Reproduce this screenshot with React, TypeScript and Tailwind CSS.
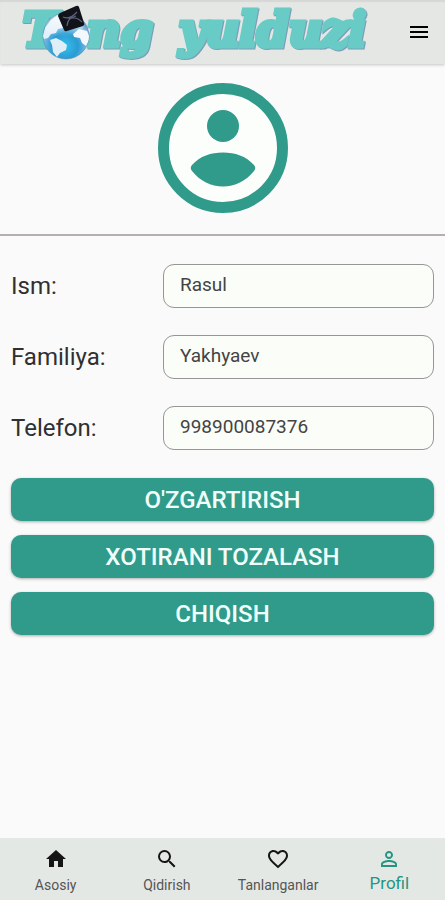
import React from 'react';
import { MdFavoriteBorder, MdHome, MdMenu, MdPersonOutline, MdSearch } from 'react-icons/md';

function Logo() {
  return (
    <svg viewBox="0 0 360 64" className="h-16 w-[360px] shrink-0" role="img" aria-label="Tong yulduzi">
      <defs>
        <radialGradient id="ocean" cx="48%" cy="72%" r="70%">
          <stop offset="0" stopColor="#35c0ec" />
          <stop offset="0.4" stopColor="#2a9bd3" />
          <stop offset="0.75" stopColor="#8fc3e8" />
          <stop offset="1" stopColor="#4f86bd" />
        </radialGradient>
        <linearGradient id="gloss" x1="0" y1="0" x2="0" y2="1">
          <stop offset="0" stopColor="#ffffff" stopOpacity="0.8" />
          <stop offset="1" stopColor="#ffffff" stopOpacity="0" />
        </linearGradient>
        <clipPath id="globe">
          <circle cx="50" cy="36" r="23" />
        </clipPath>
      </defs>
      <g
        fontFamily="'DejaVu Serif', serif"
        fontWeight="700"
        fontStyle="italic"
        fontSize="46"
        strokeWidth="5"
        strokeLinejoin="miter"
        fill="#68cbc5"
        stroke="#68cbc5"
        className="[filter:drop-shadow(1px_1px_0_#7d9bb8)]"
      >
        <text x="7" y="46">T</text>
        <text x="71" y="46">ng</text>
        <text x="163" y="46">yulduzi</text>
      </g>
      <circle cx="50" cy="36" r="23" fill="url(#ocean)" stroke="#4b7fb0" strokeWidth="0.5" />
      <g clipPath="url(#globe)">
        <path d="M27 36l2-8 6-8 7-5 7 3 2 5-4 5-5 1-2 4-5 1-3 4-4 1z" fill="#e3f0fb" />
        <path d="M34 40l6-2 6 3 5 4-1 5-6 3-3 4-4-5-1-7z" fill="#e0eef8" />
        <path d="M57 34l6-5 8 2 3 7-4 8-4-3-2-5-6-1z" fill="#f2f8fc" />
        <ellipse cx="48" cy="24" rx="20" ry="13" fill="url(#gloss)" />
      </g>
      <path d="M44 13l16-7q2-1 3 1l5 16q1 2-1 3l-16 5q-2 1-3-1l-6-14q0-2 2-3z" fill="#12121b" />
      <path d="M47 17q7 3 14-5M51 26q1-9 7-8 4 0 8 4M53 19l7-3" fill="none" stroke="#5c627a" strokeWidth="1.2" />
    </svg>
  );
}

function Avatar() {
  return (
    <svg viewBox="0 0 130 130" className="size-[130px] text-[#309b8a]" role="img" aria-label="Profil">
      <circle cx="65" cy="65" r="59.5" fill="#fcfefb" stroke="currentColor" strokeWidth="11" />
      <circle cx="65" cy="43" r="16" fill="currentColor" />
      <path
        d="M34 82C42 73 53 69.500 65 69.500S88 73 96 82Q98.500 85 96 88C88 98 77 103.500 65 103.500S42 98 34 88Q31.500 85 34 82z"
        fill="currentColor"
      />
    </svg>
  );
}

const fields = [
  { id: 'ism', label: 'Ism:', value: 'Rasul', type: 'text' },
  { id: 'familiya', label: 'Familiya:', value: 'Yakhyaev', type: 'text' },
  { id: 'telefon', label: 'Telefon:', value: '998900087376', type: 'tel' },
];

const actions = ["O'ZGARTIRISH", 'XOTIRANI TOZALASH', 'CHIQISH'];

const tabs = [
  { label: 'Asosiy', Icon: MdHome },
  { label: 'Qidirish', Icon: MdSearch },
  { label: 'Tanlanganlar', Icon: MdFavoriteBorder },
  { label: 'Profil', Icon: MdPersonOutline, active: true },
];

export default function App() {
  return (
    <div className="flex min-h-screen flex-col bg-[#fafafa] font-[Roboto,sans-serif] text-[#303030]">
      <header className="flex h-16 items-center justify-between bg-[#e5e7e4] pr-3.5 pl-4 shadow-[0_1px_3px_#00000035,inset_0_2px_1px_#d6d8d5]">
        <Logo />
        <button type="button" aria-label="Menyu" className="text-black">
          <MdMenu className="size-6" />
        </button>
      </header>

      <main className="flex-1">
        <div className="flex justify-center border-b-2 border-[#b5afae] pt-[19px] pb-[21px]">
          <Avatar />
        </div>
        <form className="px-[11px] pt-7" onSubmit={(e) => e.preventDefault()}>
          <div className="flex flex-col gap-[27px]">
            {fields.map((f) => (
              <div key={f.id} className="grid grid-cols-[152px_1fr] items-center">
                <label htmlFor={f.id} className="text-2xl leading-7">
                  {f.label}
                </label>
                <input
                  id={f.id}
                  type={f.type}
                  defaultValue={f.value}
                  className="h-11 w-full min-w-0 rounded-[11px] border border-[#969696] bg-[#fbfdf9] px-4 pb-1 text-[19px] text-[#444444] outline-none"
                />
              </div>
            ))}
          </div>
          <div className="mt-7 flex flex-col gap-3.5">
            {actions.map((a) => (
              <button
                key={a}
                type="button"
                className="h-[43px] rounded-[10px] bg-[#309b8a] text-2xl font-medium text-[#f0fffc] shadow-[0_1px_3px_#00000050]"
              >
                {a}
              </button>
            ))}
          </div>
        </form>
      </main>

      <nav className="grid h-[62px] grid-cols-4 bg-[#e4e8e4]">
        {tabs.map(({ label, Icon, active }) => (
          <a
            key={label}
            href="#"
            aria-current={active ? 'page' : undefined}
            className={
              active
                ? 'flex flex-col items-center pt-[9px] text-[17px] leading-6 text-[#249583]'
                : 'flex flex-col items-center pt-[9px] text-sm leading-7 text-[#555555]'
            }
          >
            <Icon className={active ? 'size-6' : 'size-6 text-[#151515]'} />
            {label}
          </a>
        ))}
      </nav>
    </div>
  );
}
